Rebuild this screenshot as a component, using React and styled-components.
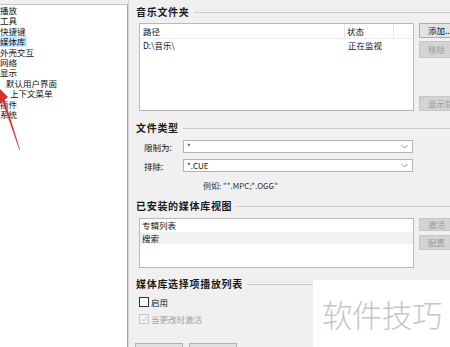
import React from 'react';
import styled, { createGlobalStyle } from 'styled-components';

const Global = createGlobalStyle`
  html, body { margin: 0; padding: 0; background: #f0f0f0; }
  body { font-family: "Noto Sans CJK SC", "Noto Sans", sans-serif; color: #111; }
`;

const Window = styled.div`
  position: relative;
  display: flex;
  width: 450px;
  height: 347px;
  overflow: hidden;
  background: #f0f0f0;
`;

const Tree = styled.div`
  position: relative;
  width: 128px;
  flex: none;
  box-sizing: border-box;
  margin-top: 4px;
  background: #fff;
  border-top: 1px solid #c4c4c4;
  border-right: 1px solid #a4a4a4;
  overflow: hidden;
`;

const TreeItem = styled.div`
  height: 10.4px;
  line-height: 10.4px;
  font-size: 8.5px;
  white-space: nowrap;
  padding-left: ${p => p.indent}px;
  span {
    display: inline-block;
    background: ${p => (p.selected ? '#cce8ff' : 'transparent')};
    padding-right: 1px;
  }
`;

const Arrow = styled.svg`
  position: absolute;
  left: 0;
  top: 78px;
`;

const Pane = styled.div`
  flex: 1;
  display: flex;
  flex-direction: column;
  padding: 6px 0 0 7px;
  border-left: 1px solid #d8d8d8;
  overflow: hidden;
`;

const GroupTitle = styled.div`
  display: flex;
  align-items: center;
  gap: 4px;
  height: 12px;
  margin-top: ${p => p.mt || 0}px;
  b {
    font-size: 10px;
    letter-spacing: 0.7px;
    line-height: 12px;
    font-weight: 700;
    color: #1a1a1a;
    white-space: nowrap;
  }
  &::after {
    content: '';
    flex: 1;
    height: 1px;
    background: #cdcdcd;
  }
`;

const ListRow = styled.div`
  display: flex;
  gap: 5px;
  margin: ${p => p.mt}px 0 0 3px;
`;

const ListBox = styled.div`
  width: 275px;
  height: ${p => p.h}px;
  flex: none;
  box-sizing: border-box;
  background: #fff;
  border: 1px solid #b9b9b9;
  font-size: 8.5px;
`;

const Header = styled.div`
  display: flex;
  height: 14px;
  line-height: 14px;
  border-bottom: 1px solid #ececec;
`;

const Cell = styled.div`
  width: ${p => p.w}px;
  flex: none;
  box-sizing: border-box;
  padding-left: ${p => p.pl || 3}px;
  border-right: ${p => (p.sep ? '1px solid #e6e6e6' : 'none')};
  white-space: nowrap;
`;

const Row = styled.div`
  display: flex;
  height: 12.5px;
  line-height: 12.5px;
  background: ${p => (p.sel ? '#f2f2f2' : 'transparent')};
`;

const Buttons = styled.div`
  display: flex;
  flex-direction: column;
  gap: ${p => p.gap}px;
`;

const Btn = styled.div`
  width: 62px;
  height: ${p => p.h || 15}px;
  margin-top: ${p => p.mt || 0}px;
  box-sizing: border-box;
  padding-left: 8px;
  font-size: 8.5px;
  line-height: ${p => (p.h || 15) - 2}px;
  white-space: nowrap;
  background: ${p => (p.disabled ? '#d3d3d3' : '#e3e3e3')};
  color: ${p => (p.disabled ? '#9c9c9c' : '#111')};
  border: 1px solid ${p => (p.disabled ? '#c6c6c6' : '#adadad')};
`;

const FieldRow = styled.div`
  display: flex;
  align-items: center;
  margin: ${p => p.mt}px 0 0 8px;
  font-size: 8.5px;
`;

const Label = styled.div`
  width: 39px;
  flex: none;
`;

const Combo = styled.div`
  width: 230px;
  height: 13px;
  box-sizing: border-box;
  display: flex;
  align-items: center;
  justify-content: space-between;
  padding: 0 4px 0 3px;
  background: #fff;
  border: 1px solid #b4b4b4;
  font-size: 8px;
`;

const Hint = styled.div`
  margin: 8px 0 0 67px;
  height: 12px;
  line-height: 12px;
  font-size: 8px;
  color: #333;
`;

const Check = styled.label`
  display: flex;
  align-items: center;
  gap: 2px;
  height: 12px;
  margin: ${p => p.mt}px 0 0 3px;
  font-size: 8.5px;
  color: ${p => (p.disabled ? '#a0a0a0' : '#111')};
`;

const Box = styled.span`
  width: 10px;
  height: 10px;
  box-sizing: border-box;
  display: flex;
  align-items: center;
  justify-content: center;
  background: ${p => (p.disabled ? '#f3f3f3' : '#fff')};
  border: 1px solid ${p => (p.disabled ? '#c8c8c8' : '#333')};
`;

const BottomRow = styled.div`
  display: flex;
  gap: 6px;
  margin: 18px 0 0 -1px;
`;

const BottomBtn = styled.div`
  width: 48px;
  height: 16px;
  box-sizing: border-box;
  background: #e1e1e1;
  border: 1px solid #b2b2b2;
`;

const Watermark = styled.div`
  position: absolute;
  left: 313px;
  top: 280px;
  right: 0;
  bottom: 0;
  background: #fff;
  display: flex;
  align-items: center;
  padding-left: 9px;
  font-size: 30.5px;
  font-weight: 300;
  color: #c6c6c6;
  letter-spacing: -0.5px;
  white-space: nowrap;
`;

const Chevron = () => (
  <svg width="7" height="5" viewBox="0 0 7 5">
    <path d="M0.5 1 L3.5 4 L6.5 1" fill="none" stroke="#8a8a8a" strokeWidth="0.9" />
  </svg>
);

const treeItems = [
  { t: '播放', i: -3 },
  { t: '工具', i: -3 },
  { t: '快捷键', i: -3 },
  { t: '媒体库', i: -3, sel: true },
  { t: '外壳交互', i: -3 },
  { t: '网络', i: -3 },
  { t: '显示', i: -3 },
  { t: '默认用户界面', i: 6 },
  { t: '上下文菜单', i: 10 },
  { t: '插件', i: -3 },
  { t: '系统', i: -3 },
];

export default function App() {
  return (
    <Window>
      <Global />
      <Tree>
        {treeItems.map(it => (
          <TreeItem key={it.t} indent={it.i} selected={it.sel}>
            <span>{it.t}</span>
          </TreeItem>
        ))}
        <Arrow width="26" height="72" viewBox="0 0 26 72">
          <path d="M5 16 L20.5 67 L19.3 67 L1.5 18 Z" fill="#f6c9c9" opacity="0.6" />
          <path d="M4 15 L20 67 L19.4 67 L2 17 Z" fill="#d8302a" />
          <path d="M-3 3 L8 14 L-1 22 Z" fill="#d8302a" />
        </Arrow>
      </Tree>
      <Pane>
        <GroupTitle><b>音乐文件夹</b></GroupTitle>
        <ListRow mt={5}>
          <ListBox h={88}>
            <Header>
              <Cell w={205} sep>路径</Cell>
              <Cell w={49} sep pl={2}>状态</Cell>
            </Header>
            <Row>
              <Cell w={205}>D:\音乐\</Cell>
              <Cell w={49} pl={3}>正在监视</Cell>
            </Row>
          </ListBox>
          <Buttons gap={3}>
            <Btn>添加...</Btn>
            <Btn disabled h={17}>移除</Btn>
            <Btn disabled mt={35}>显示错误...</Btn>
          </Buttons>
        </ListRow>

        <GroupTitle mt={11}><b>文件类型</b></GroupTitle>
        <FieldRow mt={6}>
          <Label>限制为:</Label>
          <Combo>*<Chevron /></Combo>
        </FieldRow>
        <FieldRow mt={6}>
          <Label>排除:</Label>
          <Combo>*.CUE<Chevron /></Combo>
        </FieldRow>
        <Hint>例如: "*.MPC;*.OGG"</Hint>

        <GroupTitle mt={8}><b>已安装的媒体库视图</b></GroupTitle>
        <ListRow mt={6}>
          <ListBox h={50}>
            <Row>
              <Cell w={200} pl={2}>专辑列表</Cell>
            </Row>
            <Row sel>
              <Cell w={200} pl={2}>搜索</Cell>
            </Row>
          </ListBox>
          <Buttons gap={4}>
            <Btn disabled h={13}>激活</Btn>
            <Btn disabled>配置</Btn>
          </Buttons>
        </ListRow>

        <GroupTitle mt={10}><b>媒体库选择项播放列表</b></GroupTitle>
        <Check mt={6}>
          <Box />
          启用
        </Check>
        <Check mt={5} disabled>
          <Box disabled>
            <svg width="7" height="6" viewBox="0 0 7 6">
              <path d="M0.8 3 L2.7 5 L6.3 0.8" fill="none" stroke="#c4c4c4" strokeWidth="1" />
            </svg>
          </Box>
          当更改时激活
        </Check>
        <BottomRow>
          <BottomBtn />
          <BottomBtn />
        </BottomRow>
      </Pane>
      <Watermark>软件技巧</Watermark>
    </Window>
  );
}
